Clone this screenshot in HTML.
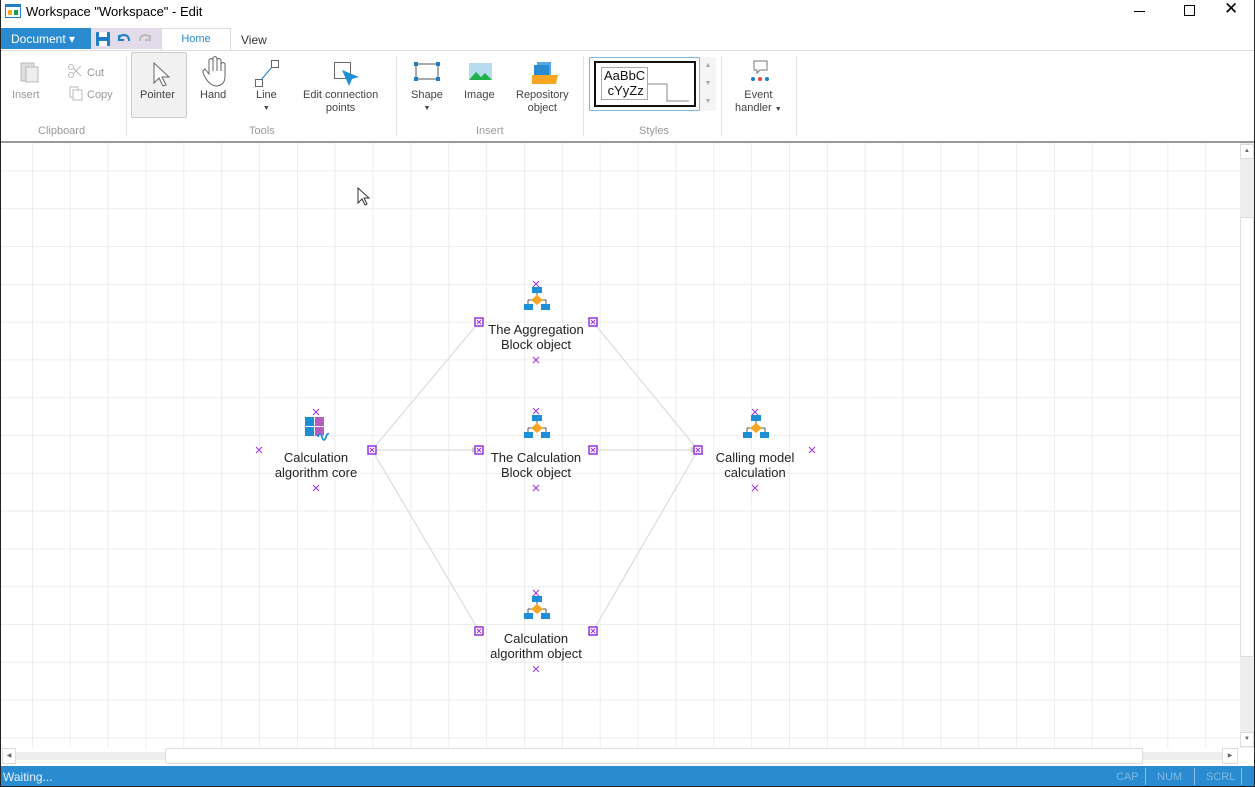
<!DOCTYPE html>
<html><head><meta charset="utf-8"><style>
*{margin:0;padding:0;box-sizing:border-box}
body{width:1255px;height:787px;overflow:hidden;background:#fff;font-family:"Liberation Sans",sans-serif;font-size:12px;color:#333;position:relative}
.a{position:absolute}
.t{font-size:11px;color:#444;text-align:center;white-space:nowrap}
.g{color:#999}
</style></head><body>
<div class="a" style="left:0;top:0;width:1255px;height:787px;border:1px solid #222;border-top:none;border-bottom:none;pointer-events:none;z-index:9"></div>
<!-- title -->
<svg class="a" style="left:5;top:4px;left:5px" width="16" height="14"><rect x="0.5" y="0.5" width="15" height="13" fill="#fff" stroke="#1e7fc8"/><rect x="0" y="0" width="16" height="3" fill="#1e7fc8"/><rect x="3" y="6" width="4" height="5" fill="#f5a623"/><rect x="9" y="6" width="4" height="5" fill="#1e9c4a"/></svg>
<div class="a" style="left:26px;top:4px;font-size:13px;color:#000">Workspace "Workspace" - Edit</div>
<div class="a" style="left:1134px;top:11px;width:11px;height:1px;background:#000"></div>
<div class="a" style="left:1184px;top:5px;width:11px;height:11px;border:1px solid #000"></div>
<div class="a" style="left:1224px;top:-1px;font-size:17px;color:#000">✕</div>
<!-- quick access -->
<div class="a" style="left:0;top:28px;width:91px;height:21px;background:#2a8bd0;color:#fff;font-size:12px;padding:4px 0 0 11px">Document ▾</div>
<div class="a" style="left:91px;top:28px;width:70px;height:21px;background:#e2dcea"></div>
<svg class="a" style="left:95px;top:31px" width="60" height="16"><rect x="1" y="1" width="14" height="14" rx="1" fill="#1e7fc8"/><rect x="4" y="1" width="8" height="5" fill="#fff"/><rect x="4" y="10" width="8" height="5" fill="#fff"/><path d="M24 8 q0-4 5-4 q5 0 5 6 M24 4 v5 h5" stroke="#1e7fc8" stroke-width="2" fill="none"/><path d="M55 8 q0-4-5-4 q-5 0-5 6 M55 4 v5 h-5" stroke="#bbb" stroke-width="2" fill="none"/></svg>
<div class="a" style="left:161px;top:28px;width:70px;height:23px;border:1px solid #ddd;border-bottom:none;background:#fff;color:#2a8bd0;font-size:11px;text-align:center;padding-top:4px">Home</div>
<div class="a" style="left:241px;top:33px;font-size:12px;color:#333">View</div>
<div class="a" style="left:0;top:50px;width:1255px;height:1px;background:#ddd"></div>
<!-- ribbon -->
<div class="a" style="left:131px;top:52px;width:56px;height:66px;background:#f1f1f1;border:1px solid #ccc;border-radius:2px"></div>
<svg class="a" style="left:0;top:55px" width="820" height="60">
<g fill="none" stroke="#bbb"><rect x="21" y="8" width="13" height="18" fill="#ddd"/><rect x="26" y="12" width="12" height="15" fill="#eee"/>
<circle cx="71" cy="20" r="2.5"/><circle cx="71" cy="12" r="2.5"/><path d="M73 19 l8-8 M73 13 l8 8"/>
<rect x="70" y="32" width="8" height="10"/><rect x="73" y="35" width="9" height="10" fill="#fff"/></g>
<path d="M154 8 v20 l5-5 l4 8 l3-1 l-4-8 h7 z" fill="#fff" stroke="#666"/>
<path d="M205 22 q-4-6 0-8 l4 5 v-14 q2-3 4 0 v11 v-13 q2-3 4 0 v13 v-11 q2-3 4 0 v11 v-7 q2-3 4 0 v12 q0 9-8 10 q-7 0-12-9z" fill="#fff" stroke="#666"/>
<rect x="255.5" y="24.5" width="7" height="7" fill="#fff" stroke="#666"/><rect x="271.5" y="5.5" width="7" height="7" fill="#fff" stroke="#666"/><path d="M261 25 l11-13" stroke="#1e7fc8"/>
<rect x="334.5" y="7.5" width="16" height="16" fill="#fff" stroke="#666"/><path d="M342 15 l17 7 l-7 2 l-3 7z" fill="#1e8fd6"/>
<rect x="416" y="9" width="22" height="15" fill="none" stroke="#555"/><g fill="#1e7fc8"><rect x="414" y="7" width="4" height="4"/><rect x="436" y="7" width="4" height="4"/><rect x="414" y="22" width="4" height="4"/><rect x="436" y="22" width="4" height="4"/></g>
<rect x="469" y="8" width="23" height="17" fill="#b8dcef"/><path d="M469 25 l7-8 l5 5 l4-4 l7 7z" fill="#22b14c"/>
<path d="M537 7 h14 v13 h-14z" fill="#5aa8e0"/><path d="M534 10 h15 v14 h-15z" fill="#2a8bd0"/><path d="M532 20 h26 l-2 9 h-24z" fill="#f5a623"/>
<rect x="585" y="2" width="115" height="55" fill="none"/>
<path d="M754 6 h13 v9 h-7 l-3 3 v-3 h-3z" fill="#fff" stroke="#777"/><circle cx="753" cy="24" r="2" fill="#1e7fc8"/><circle cx="760" cy="24" r="2" fill="#e44"/><circle cx="767" cy="24" r="2" fill="#1e7fc8"/>
</svg>
<div class="a t g" style="left:12px;top:89px">Insert</div>
<div class="a t g" style="left:87px;top:67px">Cut</div>
<div class="a t g" style="left:87px;top:89px">Copy</div>
<div class="a t" style="left:140px;top:89px">Pointer</div>
<div class="a t" style="left:200px;top:89px">Hand</div>
<div class="a t" style="left:256px;top:89px">Line<br><span style="font-size:7px">▼</span></div>
<div class="a t" style="left:303px;top:89px;line-height:13px">Edit connection<br>points</div>
<div class="a t" style="left:411px;top:89px">Shape<br><span style="font-size:7px">▼</span></div>
<div class="a t" style="left:464px;top:89px">Image</div>
<div class="a t" style="left:516px;top:89px;line-height:13px">Repository<br>object</div>
<div class="a t" style="left:735px;top:89px;line-height:13px">Event<br>handler <span style="font-size:7px">▼</span></div>
<div class="a t g" style="left:38px;top:125px">Clipboard</div>
<div class="a t g" style="left:249px;top:125px">Tools</div>
<div class="a t g" style="left:476px;top:125px">Insert</div>
<div class="a t g" style="left:639px;top:125px">Styles</div>
<div class="a" style="left:126px;top:56px;width:1px;height:80px;background:#e5e5e5"></div>
<div class="a" style="left:396px;top:56px;width:1px;height:80px;background:#e5e5e5"></div>
<div class="a" style="left:583px;top:56px;width:1px;height:80px;background:#e5e5e5"></div>
<div class="a" style="left:721px;top:56px;width:1px;height:80px;background:#e5e5e5"></div>
<div class="a" style="left:796px;top:56px;width:1px;height:80px;background:#e5e5e5"></div>
<div class="a" style="left:589px;top:57px;width:111px;height:54px;border:1px solid #7ab8e6;border-radius:2px;background:#fff"></div>
<div class="a" style="left:594px;top:61px;width:102px;height:46px;border:2px solid #111"></div>
<div class="a" style="left:601px;top:67px;width:47px;height:33px;border:1px solid #aaa;font-size:13px;color:#111;line-height:15px;padding-left:2px">AaBbC<br>&nbsp;cYyZz</div>
<svg class="a" style="left:648px;top:83px" width="45" height="20"><path d="M0 1 h19 v17 h22" fill="none" stroke="#888"/></svg>
<div class="a" style="left:700px;top:57px;width:16px;height:54px;background:#f5f5f5;color:#aaa;font-size:7px;text-align:center;line-height:18px">▲<br>▼<br>▼</div>
<div class="a" style="left:0;top:141px;width:1255px;height:2px;background:#999"></div>
<!-- canvas -->
<svg class="a" style="left:0;top:143px" width="1240" height="605">
<defs><pattern id="gr" x="32" y="27.5" width="37.85" height="37.8" patternUnits="userSpaceOnUse"><path d="M0 0 v38 M0 0 h38" stroke="#e8e8e8" stroke-width="1.5" fill="none"/></pattern>
<g id="blk"><rect x="-5" y="0" width="10" height="6" fill="#1e8fd6"/><path d="M0 6 v3 M-9 13 h18 M-9 13 v4 M9 13 v4" stroke="#555" fill="none"/><path d="M0 8 l6 5 l-6 5 l-6-5z" fill="#f5a623"/><rect x="-13" y="17" width="9" height="6" fill="#1e8fd6"/><rect x="4" y="17" width="9" height="6" fill="#1e8fd6"/></g>
<g id="cp"><rect x="-4" y="-4" width="8" height="8" fill="#fff" stroke="#9b30e0" stroke-width="1.5"/><path d="M-2 -2 l4 4 M2 -2 l-4 4" stroke="#9b30e0"/></g>
<g id="x"><path d="M-3 -3 l6 6 M3 -3 l-6 6" stroke="#9b30e0" stroke-width="1"/></g></defs>
<rect width="1240" height="605" fill="url(#gr)"/>
<g stroke="#dcdcdc" stroke-width="1.2" fill="none"><path d="M372 307 L479 179 M372 307 H479 M372 307 L479 488 M593 179 L698 307 M593 307 H698 M593 488 L698 307"/></g>
<g fill="#ccc"><path d="M479 307 l-7 -3 v6z M698 307 l-7-3 v6z"/></g>
<g transform="translate(537,144)"><use href="#blk"/></g>
<g transform="translate(537,272)"><use href="#blk"/></g>
<g transform="translate(537,453)"><use href="#blk"/></g>
<g transform="translate(756,272)"><use href="#blk"/></g>
<g transform="translate(305,274)"><rect x="0" y="0" width="9" height="9" fill="#1e8fd6"/><rect x="0" y="10" width="9" height="9" fill="#1e8fd6"/><rect x="10" y="0" width="9" height="9" fill="#b85dc0"/><rect x="10" y="10" width="9" height="9" fill="#b85dc0"/><path d="M13 20 q2-6 4 0 q2 6 4 0 q1-4 3-3" stroke="#1e8fd6" stroke-width="1.8" fill="#fff"/></g>
<g transform="translate(479,179)"><use href="#cp"/></g><g transform="translate(593,179)"><use href="#cp"/></g>
<g transform="translate(372,307)"><use href="#cp"/></g><g transform="translate(479,307)"><use href="#cp"/></g><g transform="translate(593,307)"><use href="#cp"/></g><g transform="translate(698,307)"><use href="#cp"/></g>
<g transform="translate(479,488)"><use href="#cp"/></g><g transform="translate(593,488)"><use href="#cp"/></g>
<g transform="translate(536,141)"><use href="#x"/></g><g transform="translate(536,217)"><use href="#x"/></g>
<g transform="translate(536,268)"><use href="#x"/></g><g transform="translate(536,345)"><use href="#x"/></g>
<g transform="translate(536,450)"><use href="#x"/></g><g transform="translate(536,526)"><use href="#x"/></g>
<g transform="translate(316,269)"><use href="#x"/></g><g transform="translate(316,345)"><use href="#x"/></g><g transform="translate(259,307)"><use href="#x"/></g>
<g transform="translate(755,269)"><use href="#x"/></g><g transform="translate(755,345)"><use href="#x"/></g><g transform="translate(812,307)"><use href="#x"/></g>
<path d="M358 45 v15 l4-4 l3 6 l2-1 l-3-6 h5z" fill="#fff" stroke="#333"/>
<g font-family="Liberation Sans" font-size="13" fill="#222" text-anchor="middle">
<text x="536" y="191">The Aggregation</text><text x="536" y="206">Block object</text>
<text x="536" y="319">The Calculation</text><text x="536" y="334">Block object</text>
<text x="536" y="500">Calculation</text><text x="536" y="515">algorithm object</text>
<text x="316" y="319">Calculation</text><text x="316" y="334">algorithm core</text>
<text x="755" y="319">Calling model</text><text x="755" y="334">calculation</text></g>
</svg>
<!-- scrollbars -->
<div class="a" style="left:1240px;top:143px;width:15px;height:605px;background:#eee"></div>
<div class="a" style="left:1240px;top:144px;width:14px;height:15px;background:#fff;border:1px solid #ddd;font-size:6px;color:#666;text-align:center;line-height:13px">▲</div>
<div class="a" style="left:1240px;top:217px;width:14px;height:440px;background:#fff;border:1px solid #ddd;border-radius:2px"></div>
<div class="a" style="left:1240px;top:732px;width:14px;height:15px;background:#fff;border:1px solid #ddd;font-size:6px;color:#666;text-align:center;line-height:13px">▼</div>
<div class="a" style="left:0;top:748px;width:1240px;height:18px;background:#fff"></div>
<div class="a" style="left:16px;top:752px;width:1207px;height:8px;background:#eee"></div>
<div class="a" style="left:2px;top:748px;width:14px;height:16px;background:#fff;border:1px solid #ddd;font-size:6px;color:#666;text-align:center;line-height:14px">◀</div>
<div class="a" style="left:165px;top:748px;width:978px;height:16px;background:#fff;border:1px solid #ddd;border-radius:2px"></div>
<div class="a" style="left:1222px;top:748px;width:16px;height:16px;background:#fff;border:1px solid #ddd;font-size:6px;color:#666;text-align:center;line-height:14px">▶</div>
<!-- status -->
<div class="a" style="left:0;top:766px;width:1255px;height:20px;background:#2a8bd0;color:#e8f3fb;font-size:12px;padding:4px 0 0 3px">Waiting...</div>
<div class="a" style="left:1116px;top:771px;color:#7fb8e3;font-size:11px">CAP</div>
<div class="a" style="left:1145px;top:768px;width:1px;height:17px;background:#8cc1e8"></div>
<div class="a" style="left:1157px;top:771px;color:#7fb8e3;font-size:11px">NUM</div>
<div class="a" style="left:1194px;top:768px;width:1px;height:17px;background:#8cc1e8"></div>
<div class="a" style="left:1206px;top:771px;color:#7fb8e3;font-size:11px">SCRL</div>
<div class="a" style="left:1241px;top:768px;width:1px;height:17px;background:#8cc1e8"></div>
<div class="a" style="left:0;top:786px;width:1255px;height:1px;background:#222"></div>
</body></html>
